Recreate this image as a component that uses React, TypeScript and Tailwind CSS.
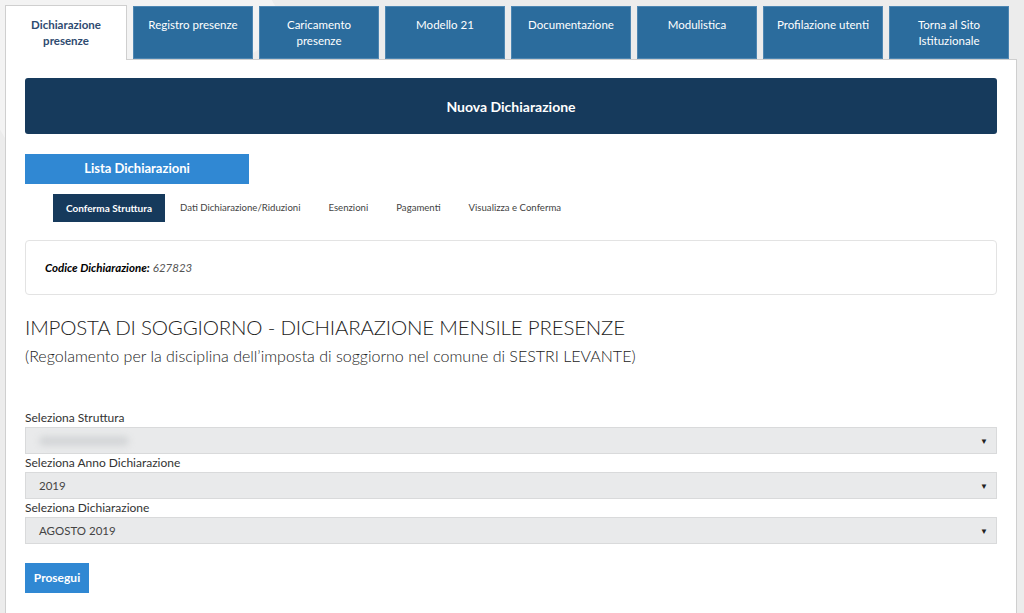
const TABS = [
  { label: ["Dichiarazione", "presenze"], active: true },
  { label: ["Registro presenze"] },
  { label: ["Caricamento", "presenze"] },
  { label: ["Modello 21"] },
  { label: ["Documentazione"] },
  { label: ["Modulistica"] },
  { label: ["Profilazione utenti"] },
  { label: ["Torna al Sito", "Istituzionale"] },
];

const STEPS = ["Conferma Struttura", "Dati Dichiarazione/Riduzioni", "Esenzioni", "Pagamenti", "Visualizza e Conferma"];

function Select({ label, value, blurred }: { label: string; value: string; blurred?: boolean }) {
  return (
    <div>
      <div className="h-[18px] text-[12px] leading-[18px] text-[#333]">{label}</div>
      <div className="flex h-[27px] items-center justify-between border border-[#d9dadb] bg-[#e9eaeb] px-[13px] text-[11.5px] text-[#444]">
        {blurred ? (
          <span className="h-[10px] w-[90px] rounded-full bg-[#d4d6d8] blur-[3px]" />
        ) : (
          <span>{value}</span>
        )}
        <span className="mr-[-5px] text-[8px] text-[#222]">▼</span>
      </div>
    </div>
  );
}

export default function App() {
  return (
    <div
      className="relative h-[613px] w-[1024px] overflow-hidden bg-[#ececec] text-[#333]"
      style={{ fontFamily: "Lato, 'Open Sans', sans-serif" }}
    >
      <div className="pointer-events-none absolute -left-10 -top-20 h-[200px] w-[300px] rotate-[-30deg] bg-white/40" />
      <div className="relative pt-[5px]">
        {/* top tabs */}
        <div className="relative z-10 ml-[5px] flex gap-[6px]">
          {TABS.map((t, i) =>
            t.active ? (
              <div
                key={i}
                className="-mb-px flex h-[55px] w-[122px] flex-col items-center border border-b-0 border-[#cfcfcf] bg-white pt-[11px] text-[11.5px] font-bold leading-[16px] text-[#2e4b70]"
              >
                {t.label.map((l) => (
                  <span key={l}>{l}</span>
                ))}
              </div>
            ) : (
              <div
                key={i}
                className="mt-px flex h-[53px] w-[120px] flex-col items-center border border-[#4d86b2] bg-[#2b6c9d] pt-[10px] text-[11.5px] leading-[16px] text-white"
              >
                {t.label.map((l) => (
                  <span key={l}>{l}</span>
                ))}
              </div>
            )
          )}
        </div>

        {/* panel */}
        <div className="ml-[5px] h-[560px] w-[1012px] border border-[#cfcfcf] bg-white px-[19px] pt-[18px]">
          <div className="flex h-[56px] items-center justify-center rounded-[3px] bg-[#163a5c] text-[14px] font-bold text-white">
            Nuova Dichiarazione
          </div>

          <div className="mt-[20px] flex h-[30px] w-[224px] items-center justify-center bg-[#3088d3] text-[13px] font-bold text-white">
            Lista Dichiarazioni
          </div>

          <div className="ml-[28px] mt-[10px] flex h-[28px] items-center text-[9.6px]">
            {STEPS.map((s, i) =>
              i === 0 ? (
                <div key={s} className="mr-[1px] flex h-full w-[112px] items-center justify-center bg-[#163a5c] text-[10px] font-bold text-white">
                  {s}
                </div>
              ) : (
                <div key={s} className="px-[14px] text-[#444]">
                  {s}
                </div>
              )
            )}
          </div>

          <div className="mt-[18px] flex h-[55px] items-center rounded-[4px] border border-[#e3e3e3] px-[19px] text-[11.5px] italic">
            <span className="font-bold text-black">Codice Dichiarazione:</span>
            <span className="ml-[3px] text-[#555]">627823</span>
          </div>

          <h1 className="mt-[17px] text-[20.5px] font-light leading-[30px] tracking-[-0.2px] text-[#222]">
            IMPOSTA DI SOGGIORNO - DICHIARAZIONE MENSILE PRESENZE
          </h1>
          <p className="mt-[3px] text-[16px] font-light leading-[22px] text-[#222]">
            (Regolamento per la disciplina dell’imposta di soggiorno nel comune di SESTRI LEVANTE)
          </p>

          <div className="mt-[42px] flex flex-col">
            <Select label="Seleziona Struttura" value="" blurred />
            <Select label="Seleziona Anno Dichiarazione" value="2019" />
            <Select label="Seleziona Dichiarazione" value="AGOSTO 2019" />
          </div>

          <button className="mt-[19px] flex h-[30px] w-[64px] items-center justify-center bg-[#3088d3] text-[12px] font-bold text-white">
            Prosegui
          </button>
        </div>
      </div>
    </div>
  );
}
